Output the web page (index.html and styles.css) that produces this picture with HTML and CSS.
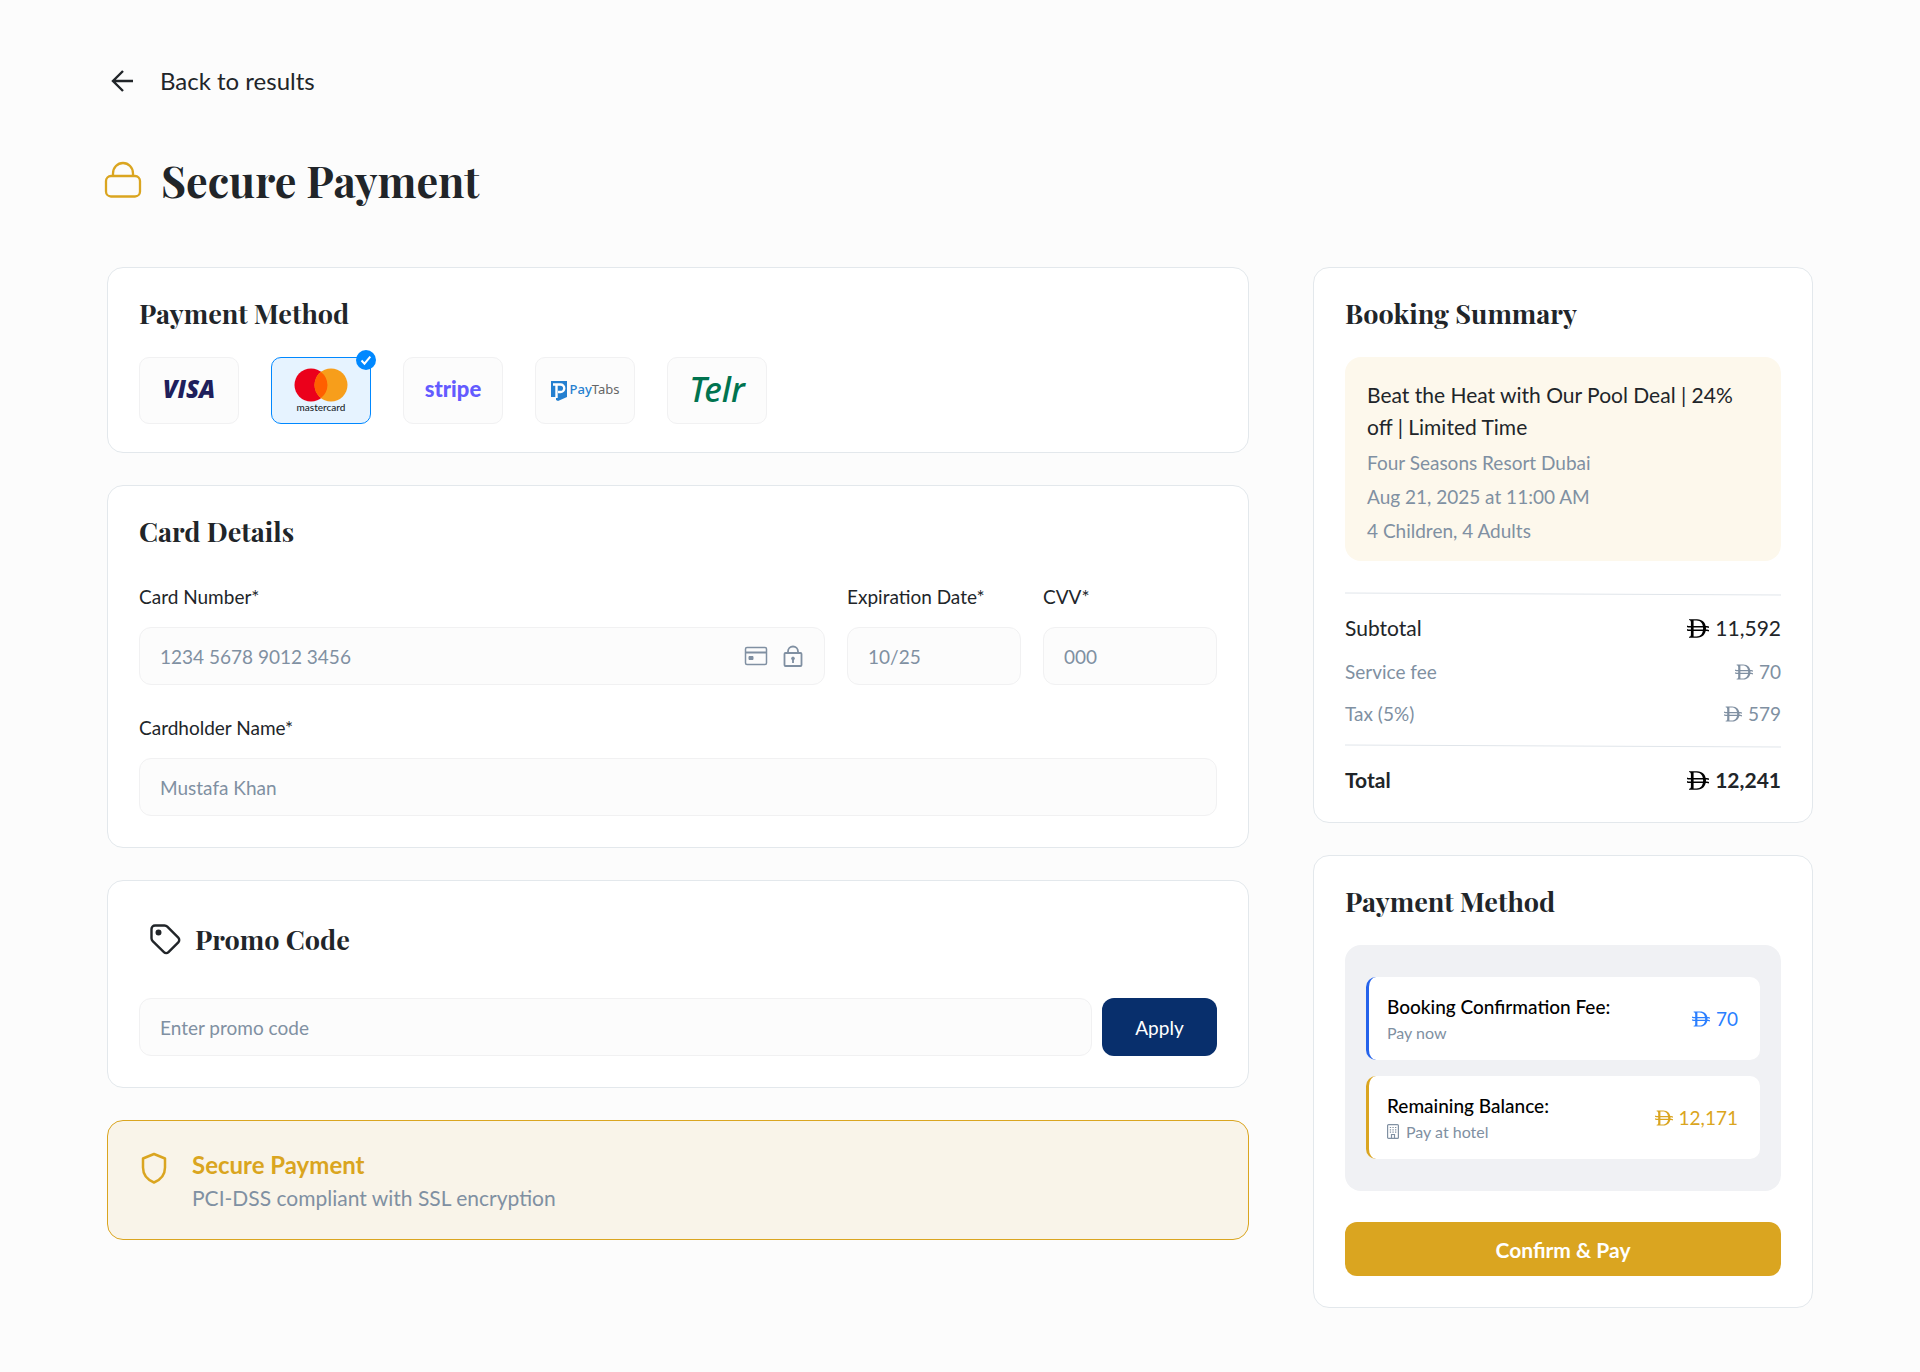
FILE: index.html
```html
<!DOCTYPE html>
<html lang="en">
<head>
  <meta charset="UTF-8" />
  <meta name="viewport" content="width=device-width, initial-scale=1.0"/>
  <title>Secure Payment</title>
  <link rel="stylesheet" href="styles.css">
</head>
<body>

  <!-- Shared currency sign -->
  <svg class="sprite" aria-hidden="true">
    <symbol id="dirham" viewBox="0 0 22 19">
      <path fill="currentColor" fill-rule="evenodd" d="M2 .3h8c5.500 0 9 3.700 9 9.200s-3.500 9.200-9 9.200H2v-.8c1.400-.3 1.900-.9 1.900-2.400v-12c0-1.500-.5-2.100-1.900-2.400zM6.600 1.500v16H9.500c4.200 0 6.600-3 6.600-8s-2.400-8-6.600-8z"/>
      <path fill="none" stroke="currentColor" stroke-width="1.500" d="M0 7c.6.7 1.200.8 2 .8h18c1 0 1.400.1 2 .8M0 10.400c.6.7 1.200.8 2 .8h18c1 0 1.400.1 2 .8"/>
    </symbol>
  </svg>

  <div class="page">
    <a class="back-link" href="#">
      <svg width="28" height="28" viewBox="0 0 28 28" fill="none" stroke="currentColor" stroke-width="2.400"><path d="M26 14H7M16 4 6 14l10 10"/></svg>
      Back to results
    </a>

    <h1>
      <svg class="title-icon" width="38" height="38" viewBox="0 0 38 38" fill="none" stroke="currentColor" stroke-width="2.300"><rect x="2" y="15" width="34" height="20.500" rx="5"/><path d="M9 15v-2.500a10 10.500 0 0 1 20 0V15"/></svg>
      Secure Payment
    </h1>

    <div class="layout">
      <main class="column">

        <section class="card methods-card">
          <h2>Payment Method</h2>
          <div class="methods">
            <label class="method">
              <input type="radio" name="method" value="visa" aria-label="Visa"/>
              <span class="logo-visa">VISA</span>
            </label>
            <label class="method">
              <input type="radio" name="method" value="mastercard" aria-label="Mastercard" checked/>
              <span class="logo-mastercard">
                <svg width="54" height="34" viewBox="0 0 54 34"><circle cx="17" cy="17" r="16.500" fill="#eb001b"/><circle cx="37" cy="17" r="16.500" fill="#f79e1b"/><path d="M27 3.900a16.500 16.500 0 0 1 0 26.200a16.500 16.500 0 0 1 0-26.200z" fill="#ff5f00"/></svg>
                mastercard
              </span>
              <svg class="check" width="20" height="20" viewBox="0 0 20 20"><circle cx="10" cy="10" r="10" fill="#0088ff"/><path d="m5.500 10.500 3 3.200 5.800-7" fill="none" stroke="#fff" stroke-width="2"/></svg>
            </label>
            <label class="method">
              <input type="radio" name="method" value="stripe" aria-label="Stripe"/>
              <span class="logo-stripe">stripe</span>
            </label>
            <label class="method">
              <input type="radio" name="method" value="paytabs" aria-label="PayTabs"/>
              <span class="logo-paytabs">
                <svg width="16" height="20" viewBox="0 0 16 20"><path fill="#2580d0" d="M0 0h16v16l-9 4-2-1v-3H0z"/><path fill="none" stroke="#fff" stroke-width="2.400" d="M2 3.500h7.500a3.600 3.600 0 0 1 0 7.500H7M5.500 4v13"/></svg>
                <span><b>Pay</b>Tabs</span>
              </span>
            </label>
            <label class="method">
              <input type="radio" name="method" value="telr" aria-label="Telr"/>
              <span class="logo-telr">Telr</span>
            </label>
          </div>
        </section>

        <section class="card">
          <h2>Card Details</h2>
          <div class="card-form">
            <div class="field">
              <label for="cardNumber">Card Number*</label>
              <div class="input-wrap">
                <input type="text" id="cardNumber" placeholder="1234 5678 9012 3456"/>
                <div class="input-icons">
                  <svg width="24" height="24" viewBox="0 0 24 24" fill="none" stroke="currentColor" stroke-width="1.500"><rect x="1.500" y="3.500" width="21" height="17" rx="1.500"/><path d="M1.500 8.500h21" stroke-width="2"/><path d="M5 12.500h4v3H5z" fill="currentColor" stroke-width="1"/></svg>
                  <svg width="24" height="24" viewBox="0 0 24 24" fill="none" stroke="currentColor" stroke-width="1.800"><rect x="3.500" y="9" width="17" height="13" rx="1"/><path d="M7 9V7.500a5 5 0 0 1 10 0V9M12 14v5"/><circle cx="12" cy="14.500" r="1.400" fill="currentColor" stroke-width="1"/></svg>
                </div>
              </div>
            </div>
            <div class="field">
              <label for="expiry">Expiration Date*</label>
              <input type="text" id="expiry" placeholder="10/25"/>
            </div>
            <div class="field">
              <label for="cvv">CVV*</label>
              <input type="text" id="cvv" placeholder="000"/>
            </div>
            <div class="field field-full">
              <label for="holder">Cardholder Name*</label>
              <input type="text" id="holder" placeholder="Mustafa Khan"/>
            </div>
          </div>
        </section>

        <section class="card">
          <div class="promo-title">
            <svg width="32" height="32" viewBox="0 0 32 32" fill="none" stroke="currentColor" stroke-width="2.400" stroke-linejoin="round"><path d="M2.500 6A3.500 3.500 0 0 1 6 2.500h9.500a4 4 0 0 1 2.800 1.200L29.300 14.700a3.300 3.300 0 0 1 0 4.600l-9.800 9.800a3.300 3.300 0 0 1-4.600 0L3.700 18.100a4 4 0 0 1-1.200-2.800z"/><circle cx="9.500" cy="9.500" r="1.800" fill="currentColor"/></svg>
            <h2>Promo Code</h2>
          </div>
          <div class="promo-form">
            <input type="text" id="promo" placeholder="Enter promo code" aria-label="Promo code"/>
            <button type="button" class="apply-btn">Apply</button>
          </div>
        </section>

        <section class="secure-note">
          <svg width="30" height="34" viewBox="0 0 30 34" fill="none" stroke="currentColor" stroke-width="2.500" stroke-linejoin="round"><path d="M15 3 26 7.500v9c0 8-5 12.500-11 15-6-2.500-11-7-11-15v-9z"/></svg>
          <div>
            <h3>Secure Payment</h3>
            <p>PCI-DSS compliant with SSL encryption</p>
          </div>
        </section>
      </main>

      <aside class="column">

        <section class="card summary-card">
          <h2>Booking Summary</h2>
          <div class="deal">
            <p class="deal-title">Beat the Heat with Our Pool Deal | 24% off | Limited Time</p>
            <p>Four Seasons Resort Dubai</p>
            <p>Aug 21, 2025 at 11:00 AM</p>
            <p>4 Children, 4 Adults</p>
          </div>
          <svg class="divider" viewBox="0 0 436 4" preserveAspectRatio="none"><path d="M0 1 436 3"/></svg>
          <div class="rows">
            <div class="row row-main"><span>Subtotal</span><span class="amount"><svg><use href="#dirham"/></svg>11,592</span></div>
            <div class="row"><span>Service fee</span><span class="amount"><svg><use href="#dirham"/></svg>70</span></div>
            <div class="row"><span>Tax (5%)</span><span class="amount"><svg><use href="#dirham"/></svg>579</span></div>
          </div>
          <svg class="divider" viewBox="0 0 436 4" preserveAspectRatio="none"><path d="M0 1 436 3"/></svg>
          <div class="rows">
            <div class="row row-main row-total"><span>Total</span><span class="amount"><svg><use href="#dirham"/></svg>12,241</span></div>
          </div>
        </section>

        <section class="card">
          <h2>Payment Method</h2>
          <div class="split">
            <div class="split-item split-now">
              <div>
                <p class="split-title">Booking Confirmation Fee:</p>
                <p class="split-sub">Pay now</p>
              </div>
              <span class="amount"><svg><use href="#dirham"/></svg>70</span>
            </div>
            <div class="split-item split-later">
              <div>
                <p class="split-title">Remaining Balance:</p>
                <p class="split-sub">
                  <svg width="12" height="15" viewBox="0 0 12 15" fill="none" stroke="currentColor" stroke-width="1.200"><rect x=".6" y=".6" width="10.800" height="13.800" rx="1"/><path d="M4.500 14v-3.500h3V14"/><path d="M2.800 3.500h6.800M2.800 5.800h6.800M2.800 8.100h6.800" stroke-dasharray="1.300 1.300"/></svg>
                  Pay at hotel
                </p>
              </div>
              <span class="amount"><svg><use href="#dirham"/></svg>12,171</span>
            </div>
          </div>
          <button type="submit" class="pay-btn">Confirm &amp; Pay</button>
        </section>
      </aside>
    </div>
  </div>

</body>
</html>
```
FILE: styles.css
```css
* {
  box-sizing: border-box;
}

body {
  margin: 0;
  font-family: Lato, sans-serif;
  font-size: 19px;
  background: #fcfcfc;
  color: #212529;
}

h1,
h2,
h3,
p {
  margin: 0;
}

svg {
  display: block;
  flex-shrink: 0;
}

.sprite {
  position: absolute;
  width: 0;
  height: 0;
}

.page {
  padding: 65px 107px;
}

.back-link {
  display: flex;
  align-items: center;
  gap: 25px;
  width: fit-content;
  font-size: 24px;
  line-height: 32px;
  color: inherit;
  text-decoration: none;
}

h1,
h2 {
  font-family: "Playfair Display", "Liberation Serif", serif;
  font-weight: 700;
}

h1 {
  display: flex;
  align-items: center;
  gap: 19px;
  margin: 55px 0 59px -3px;
  font-size: 43px;
  line-height: 56px;
}

.title-icon {
  color: #daa520;
}

h2 {
  margin-bottom: 30px;
  font-size: 27px;
  line-height: 28px;
}

.layout {
  display: grid;
  grid-template-columns: 1fr 500px;
  gap: 64px;
  align-items: start;
}

.column {
  display: flex;
  flex-direction: column;
  gap: 32px;
}

.card {
  padding: 31px;
  background: #fff;
  border: 1px solid #e3e8ec;
  border-radius: 16px;
}

/* Payment methods */
.methods-card {
  padding-bottom: 28px;
}

.methods {
  display: flex;
  gap: 32px;
}

.method {
  position: relative;
  display: flex;
  align-items: center;
  justify-content: center;
  width: 100px;
  height: 67px;
  background: #fcfcfc;
  border: 1px solid #f1f1f2;
  border-radius: 10px;
  cursor: pointer;
}

.method:has(input:checked) {
  background: #e6f3ff;
  border-color: #0088ff;
}

.method input {
  position: absolute;
  opacity: 0;
}

.check {
  position: absolute;
  top: -8px;
  right: -6px;
}

.logo-visa,
.logo-stripe,
.logo-telr {
  padding-bottom: 4px;
}

.logo-visa {
  font-family: "Open Sans", sans-serif;
  font-size: 24px;
  font-weight: 800;
  font-style: italic;
  color: #1f1f5c;
}

.logo-mastercard {
  display: flex;
  flex-direction: column;
  align-items: center;
  font-size: 10px;
  line-height: 11px;
  font-weight: 500;
}

.logo-stripe {
  font-size: 22px;
  line-height: 28px;
  font-weight: 900;
  color: #635bff;
}

.logo-paytabs {
  display: flex;
  align-items: center;
  gap: 3px;
  font-family: "Noto Sans", sans-serif;
  font-size: 13px;
  line-height: 16px;
  color: #666;
}

.logo-paytabs span {
  padding-bottom: 4px;
}

.logo-paytabs b {
  font-weight: 500;
  color: #2580d0;
}

.logo-telr {
  font-family: "Noto Sans", sans-serif;
  font-size: 34px;
  line-height: 40px;
  font-style: italic;
  font-weight: 500;
  color: #00734f;
}

/* Form */
.card-form {
  display: grid;
  grid-template-columns: 1fr 174px 174px;
  gap: 31px 22px;
  padding-top: 10px;
}

.field {
  display: flex;
  flex-direction: column;
  gap: 18px;
  min-width: 0;
}

.field label {
  line-height: 24px;
}

.field-full {
  grid-column: 1 / -1;
}

.input-wrap {
  position: relative;
}

.input-icons {
  position: absolute;
  top: 17px;
  right: 20px;
  display: flex;
  gap: 13px;
  color: #8090a2;
}

input[type="text"] {
  width: 100%;
  min-width: 0;
  height: 58px;
  padding: 0 20px;
  background: #fcfcfc;
  border: 1px solid #f1f1f2;
  border-radius: 12px;
  font-family: inherit;
  font-size: 19px;
  color: #212529;
}

input::placeholder {
  color: #8090a2;
  opacity: 1;
}

.promo-title {
  display: flex;
  align-items: center;
  gap: 14px;
  padding: 11px 10px 10px;
  margin-bottom: 33px;
}

.promo-title h2 {
  margin: 0;
}

.promo-form {
  display: flex;
  gap: 10px;
}

.apply-btn,
.pay-btn {
  border: none;
  border-radius: 12px;
  color: #fff;
  font-family: inherit;
  cursor: pointer;
}

.apply-btn {
  flex: 0 0 115px;
  background: #082f6c;
  font-size: 19px;
}

.secure-note {
  display: flex;
  gap: 23px;
  padding: 27px 31px 25px;
  background: #f9f4e9;
  border: 1px solid #daa520;
  border-radius: 16px;
  color: #daa520;
}

.secure-note svg {
  margin-top: 3px;
}

.secure-note h3 {
  font-size: 24px;
  line-height: 34px;
  font-weight: 700;
}

.secure-note p {
  font-size: 21px;
  line-height: 32px;
  color: #8090a2;
}

/* Booking summary */
.summary-card {
  padding-bottom: 26px;
}

.deal {
  padding: 22px 22px 16px;
  margin-bottom: 31px;
  background: #fdf8ec;
  border-radius: 16px;
  line-height: 28px;
  color: #8090a2;
}

.deal p + p {
  margin-top: 6px;
}

.deal .deal-title {
  font-size: 21px;
  line-height: 32px;
  color: #212529;
}

.divider {
  width: 100%;
  height: 4px;
  fill: none;
  stroke: #e0e5ea;
}

.rows {
  display: flex;
  flex-direction: column;
  gap: 14px;
  padding: 16px 0;
}

.rows:last-child {
  padding-bottom: 0;
}

.row {
  display: flex;
  justify-content: space-between;
  line-height: 28px;
  color: #8090a2;
}

.row-main {
  font-size: 21px;
  line-height: 32px;
  color: #212529;
}

.row-total {
  font-weight: 700;
}

.amount {
  display: flex;
  align-items: center;
  gap: 6px;
}

.amount svg {
  width: 18px;
  height: 16px;
}

.row-main svg {
  width: 22px;
  height: 19px;
  color: #000;
}

/* Split payment */
.split {
  display: flex;
  flex-direction: column;
  gap: 16px;
  padding: 32px 21px;
  margin-bottom: 31px;
  background: #f0f1f4;
  border-radius: 16px;
}

.split-item {
  display: flex;
  align-items: center;
  justify-content: space-between;
  height: 83px;
  padding: 0 22px 0 18px;
  background: #fff;
  border-left: 3px solid;
  border-radius: 10px;
}

.split-now {
  border-color: #2563eb;
  color: #2b7fff;
}

.split-later {
  border-color: #daa520;
  color: #daa520;
}

.split-title {
  line-height: 28px;
  font-weight: 500;
  color: #000;
}

.split-sub {
  display: flex;
  align-items: center;
  gap: 7px;
  font-size: 16px;
  line-height: 24px;
  color: #8090a2;
}

.pay-btn {
  display: block;
  width: 100%;
  height: 54px;
  background: #daa520;
  font-size: 21px;
  font-weight: 700;
}
```
